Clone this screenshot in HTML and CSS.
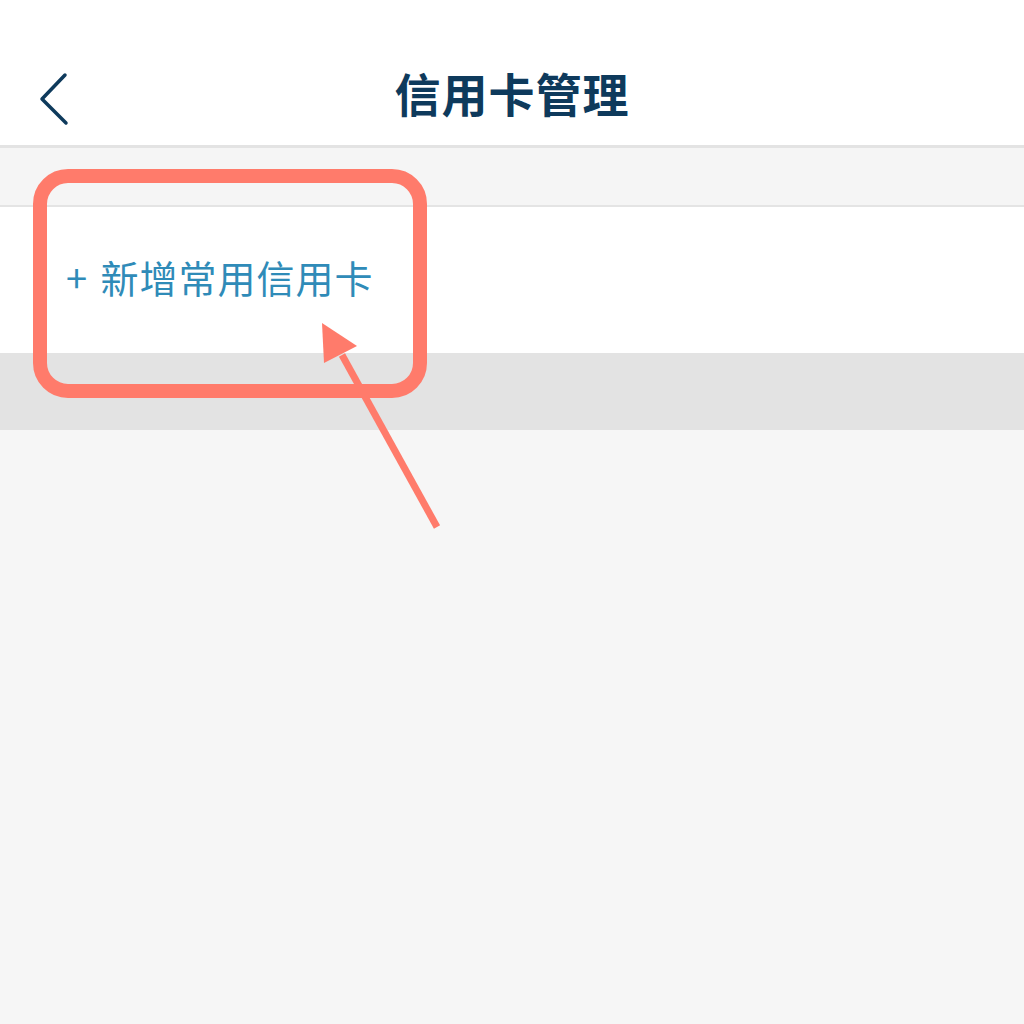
FILE: index.html
```html
<!DOCTYPE html>
<html lang="zh-Hant">
<head>
<meta charset="utf-8">
<link rel="stylesheet" href="styles.css">
</head>
<body>
<div class="page">
  <header class="topbar">
    <div class="back">
      <svg width="40" height="60" viewBox="0 0 40 60"><path d="M26 4 L3 28 L27 52" fill="none" stroke="#0e3a5c" stroke-width="3.5" stroke-linecap="round" stroke-linejoin="round"/></svg>
    </div>
    <h1 class="title">信用卡管理</h1>
  </header>
  <div class="spacer"></div>
  <div class="add-row"><span class="add">+ 新增常用信用卡</span></div>
  <div class="gray-band"></div>
  <div class="rest"></div>
  <svg class="annot" width="1024" height="1024" viewBox="0 0 1024 1024">
    <rect x="40" y="176" width="380" height="215" rx="28" ry="28" fill="none" stroke="#ff7b6b" stroke-width="14"/>
    <line x1="437" y1="527" x2="342" y2="355" stroke="#ff7b6b" stroke-width="7"/>
    <polygon points="322,323 357,346 324,363" fill="#ff7b6b"/>
  </svg>
</div>
</body>
</html>
```

FILE: styles.css
```css
html, body {
  margin: 0;
  padding: 0;
  background: #f6f6f6;
}
.page {
  position: relative;
  width: 1024px;
  height: 1024px;
  display: flex;
  flex-direction: column;
  font-family: "Noto Sans CJK TC", "Noto Sans", sans-serif;
  overflow: hidden;
}
.topbar {
  position: relative;
  height: 145px;
  background: #ffffff;
  border-bottom: 3px solid #e3e3e3;
  display: flex;
  align-items: center;
  justify-content: center;
  flex: none;
}
.back {
  position: absolute;
  left: 39px;
  top: 71px;
  width: 40px;
  height: 60px;
}
.back svg { display: block; }
.title {
  margin: 0;
  padding-top: 38px;
  font-size: 46px;
  font-weight: 700;
  color: #0e3a5c;
  letter-spacing: 1px;
  line-height: 1;
}
.spacer {
  height: 57px;
  background: #f5f5f5;
  border-bottom: 2px solid #e4e4e4;
  flex: none;
}
.add-row {
  height: 146px;
  background: #ffffff;
  display: flex;
  align-items: center;
  padding-left: 66px;
  flex: none;
  box-sizing: border-box;
}
.add {
  font-size: 38px;
  color: #2f8bb8;
  letter-spacing: 1px;
  word-spacing: 3px;
  line-height: 1;
  padding-bottom: 6px;
}
.gray-band {
  height: 77px;
  background: #e3e3e3;
  flex: none;
}
.rest {
  flex: 1;
  background: #f6f6f6;
}
.annot {
  position: absolute;
  left: 0;
  top: 0;
  pointer-events: none;
}
```
